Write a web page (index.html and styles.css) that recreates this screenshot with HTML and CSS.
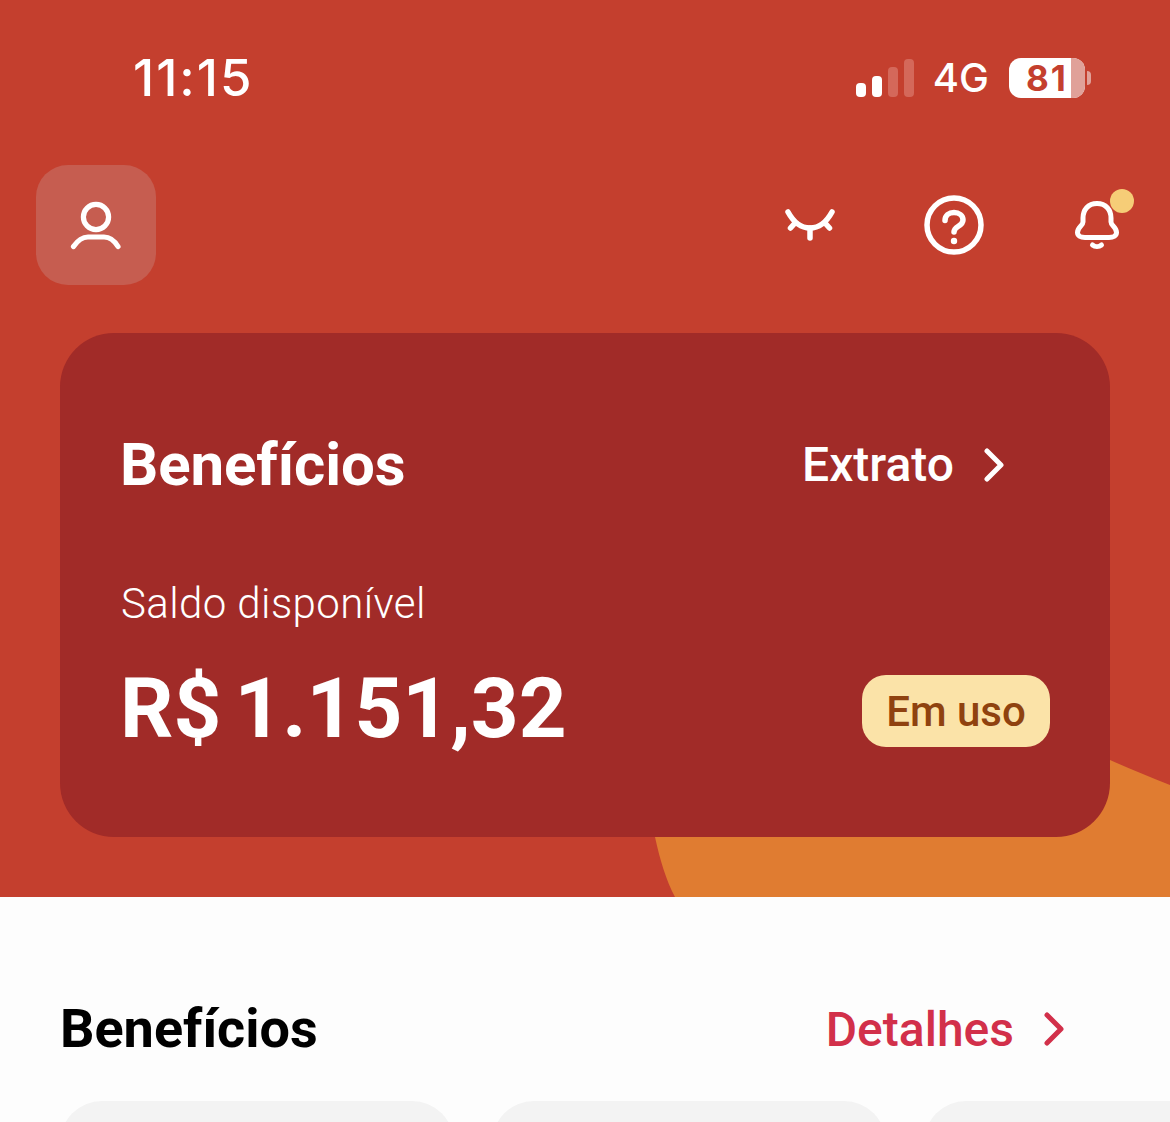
FILE: index.html
```html
<!DOCTYPE html>
<html lang="pt-BR">
<head>
<meta charset="utf-8">
<title>Benefícios</title>
<link rel="stylesheet" href="styles.css">
</head>
<body>
<main class="screen">
  <section class="hero">
    <svg class="blob" width="1170" height="897" viewBox="0 0 1170 897" aria-hidden="true"><path d="M1170 785C1150 777 1130 769 1110 760C1000 710 860 690 760 720C680 745 640 780 655 837C660 860 666 880 675 897H1170Z"/></svg>
    <div class="status">
      <span class="time">11:15</span>
      <div class="status-right">
        <div class="signal"><i class="bar b1"></i><i class="bar b2"></i><i class="bar b3"></i><i class="bar b4"></i></div>
        <span class="net">4G</span>
        <div class="battery"><div class="batt-body"><span class="batt-num">81</span><i class="batt-rest"></i></div><i class="batt-cap"></i></div>
      </div>
    </div>
    <div class="topbar">
      <div class="avatar">
        <svg width="56" height="56" viewBox="0 0 56 56" fill="none" stroke="#fff" stroke-width="5.200" stroke-linecap="round"><circle cx="28" cy="20" r="12.600"/><path d="M5.500 49.500C10 43 14 40 20 40H36C42 40 46 43 50 49.500"/></svg>
      </div>
      <div class="actions">
        <svg class="eye" width="50" height="32" viewBox="0 0 50 32" fill="none" stroke="#fff" stroke-width="5.500" stroke-linecap="round"><path d="M3 3C9 14 16 19 25 19C34 19 41 14 47 3"/><path d="M25 19V29"/><path d="M10 14L5.500 19"/><path d="M40 14L44.500 19"/></svg>
        <svg class="help" width="60" height="60" viewBox="0 0 60 60" fill="none" stroke="#fff" stroke-width="5.500" stroke-linecap="round" stroke-linejoin="round"><circle cx="30" cy="30" r="27"/><path d="M21 25.500C21 20.500 25 17.500 30 17.500C35 17.500 39 20.500 39 25C39 31.500 30 31 30 37"/><circle cx="30" cy="46" r="3.200" fill="#fff" stroke="none"/></svg>
        <div class="bell">
          <svg width="44" height="52" viewBox="0 0 44 52" fill="none" stroke="#fff" stroke-width="5" stroke-linecap="round" stroke-linejoin="round"><path d="M22 4.500C13 4.500 8 11 8 19V23C8 27 2.500 28 2.500 33.500C2.500 36.500 5.500 38.500 10 38.500H34C38.500 38.500 41.500 36.500 41.500 33.500C41.500 28 36 27 36 23V19C36 11 31 4.500 22 4.500Z"/><path d="M17.500 46C20 48 24 48 26.500 46"/></svg>
          <i class="dot"></i>
        </div>
      </div>
    </div>
    <div class="card">
      <div class="card-head">
        <h1 class="card-title">Benefícios</h1>
        <div class="card-link"><span>Extrato</span>
          <svg width="22" height="34" viewBox="0 0 22 34" fill="none" stroke="#fff" stroke-width="5" stroke-linecap="round" stroke-linejoin="round"><path d="M4 3L18 17L4 31"/></svg>
        </div>
      </div>
      <div class="balance-label">Saldo disponível</div>
      <div class="balance-row">
        <div class="balance"><span class="cur">R$</span><span>1.151,32</span></div>
        <div class="badge">Em uso</div>
      </div>
    </div>
  </section>
  <section class="content">
    <div class="section-head">
      <h2 class="section-title">Benefícios</h2>
      <div class="section-link"><span>Detalhes</span>
        <svg width="22" height="34" viewBox="0 0 22 34" fill="none" stroke="#d2304a" stroke-width="5" stroke-linecap="round" stroke-linejoin="round"><path d="M4 3L18 17L4 31"/></svg>
      </div>
    </div>
    <div class="tiles"><div class="tile"></div><div class="tile"></div><div class="tile"></div></div>
  </section>
</main>
</body>
</html>
```

FILE: styles.css
```css
* { box-sizing: border-box; }
html, body { margin: 0; padding: 0; }
body { width: 1170px; height: 1122px; overflow: hidden; background: #c43f2e; font-family: Roboto, "Liberation Sans", sans-serif; }
.screen { width: 1170px; height: 1122px; overflow: hidden; display: flex; flex-direction: column; }
.hero { position: relative; height: 897px; flex: none; background: #c43f2e; padding: 0 60px; overflow: hidden; }
.blob { position: absolute; left: 0; top: 0; }
.blob path { fill: #e07c31; }
.status { position: relative; height: 165px; margin: 0 19px 0 73px; padding-top: 50px; display: flex; justify-content: space-between; align-items: flex-start; color: #fff; }
.time { font-family: Inter, sans-serif; font-size: 51px; line-height: 56px; font-weight: 500; letter-spacing: 2px; }
.status-right { display: flex; align-items: center; height: 56px; }
.signal { display: flex; align-items: flex-end; gap: 6px; height: 38px; margin-right: 19px; }
.bar { display: block; width: 10px; border-radius: 4px; background: #fff; }
.b1 { height: 14px; }
.b2 { height: 21px; }
.b3 { height: 30px; background: #d4685a; }
.b4 { height: 38px; background: #d4685a; }
.net { font-family: Inter, sans-serif; font-size: 40px; font-weight: 500; line-height: 44px; margin-right: 20px; }
.battery { display: flex; align-items: center; gap: 2px; }
.batt-body { position: relative; width: 76px; height: 40px; border-radius: 12px; background: #fff; overflow: hidden; display: flex; align-items: center; padding-left: 17px; }
.batt-num { font-family: Inter, sans-serif; font-size: 35px; font-weight: 700; color: #c43f2e; line-height: 40px; letter-spacing: 2px; }
.batt-rest { position: absolute; right: 0; top: 0; bottom: 0; width: 14px; background: #e0a199; }
.batt-cap { display: block; width: 4px; height: 14px; border-radius: 0 6px 6px 0; background: #e0a199; }
.topbar { position: relative; display: flex; justify-content: space-between; align-items: center; height: 120px; margin: 0 -9px 48px -24px; }
.avatar { width: 120px; height: 120px; border-radius: 32px; background: #c65d50; display: flex; align-items: center; justify-content: center; }
.actions { display: flex; align-items: center; }
.eye { margin-right: 89px; }
.help { margin-right: 91px; }
.bell { position: relative; width: 44px; height: 52px; }
.bell svg { display: block; }
.dot { position: absolute; left: 35px; top: -10px; width: 24px; height: 24px; border-radius: 50%; background: #f6cd77; }
.card { position: relative; height: 504px; border-radius: 54px; background: #a12b28; padding: 97px 60px 0 60px; color: #fff; }
.card-head { display: flex; justify-content: space-between; align-items: center; height: 70px; padding-right: 45px; }
.card-title { margin: 0; font-size: 60px; line-height: 70px; font-weight: 700; letter-spacing: -0.1px; }
.card-link { display: flex; align-items: center; gap: 29px; font-size: 48px; font-weight: 500; line-height: 60px; }
.balance-label { margin-top: 79px; padding-left: 1px; font-size: 42px; line-height: 50px; font-weight: 300; letter-spacing: 0.4px; }
.balance-row { display: flex; justify-content: space-between; align-items: center; margin-top: 38px; height: 88px; }
.balance { display: flex; gap: 13px; padding-bottom: 4px; font-size: 83.500px; line-height: 88px; font-weight: 700; }
.badge { width: 188px; height: 72px; border-radius: 24px; background: #fbe3a8; color: #8f420f; display: flex; align-items: center; justify-content: center; font-size: 42px; font-weight: 500; }
.content { flex: 1; background: #fdfdfd; padding: 0 0 0 60px; overflow: hidden; }
.section-head { display: flex; justify-content: space-between; align-items: center; height: 70px; margin-top: 97px; padding-right: 105px; }
.section-title { margin: 0; font-size: 54px; line-height: 70px; font-weight: 700; color: #000; }
.section-link { display: flex; align-items: center; gap: 29px; font-size: 48px; font-weight: 500; color: #d2304a; }
.tiles { display: flex; gap: 38px; margin-top: 37px; }
.tile { width: 394px; height: 200px; flex: none; border-radius: 42px; background: #f3f3f3; }
```
